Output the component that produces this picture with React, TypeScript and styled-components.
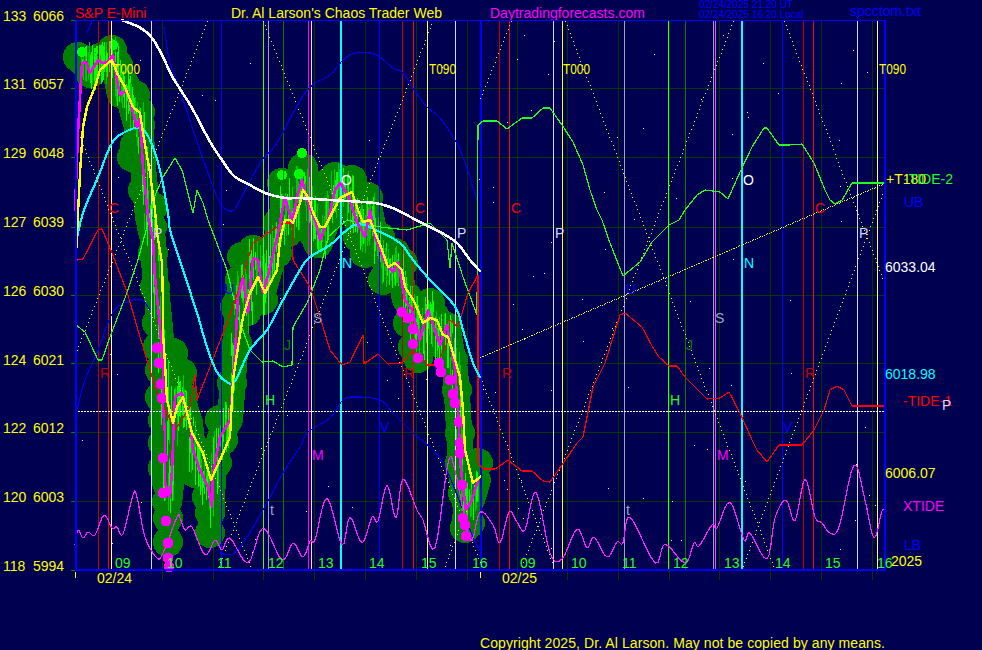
import React from "react";
import styled, { createGlobalStyle } from "styled-components";

const NAVY = "#000050";
const YELLOW = "#ffff00";
const LIME = "#20ff20";
const RED_DK = "#c00000";
const RED = "#ff0000";
const BLUE = "#0000ff";
const CYAN = "#00ffff";
const MAGENTA = "#ff00ff";
const LAV = "#d8d8ff";
const GRAY = "#a0a0c8";
const GRID = "#003800";
const GREEN_DK = "#008000";

const GlobalStyle = createGlobalStyle`
  html, body { margin: 0; padding: 0; background: ${NAVY}; overflow: hidden; }
`;

const Page = styled.div`
  width: 982px;
  height: 650px;
  display: flex;
  flex-direction: column;
  background: ${NAVY};
  font-family: "Liberation Sans", Arial, sans-serif;
  font-size: 14px;
`;

const TitleBar = styled.div`
  height: 20px;
  display: flex;
  align-items: flex-start;
  padding-left: 75px;
  line-height: 16px;
  padding-top: 5px;
  box-sizing: border-box;
`;

const Title = styled.span<{ $color: string; $gap: number; $width: number }>`
  color: ${(p) => p.$color};
  margin-left: ${(p) => p.$gap}px;
  width: ${(p) => p.$width}px;
  white-space: nowrap;
`;

const Stamp = styled.div`
  margin-left: 53px;
  width: 151px;
  margin-top: -5px;
  color: ${BLUE};
  font-size: 10px;
  line-height: 10px;
  white-space: nowrap;
`;

const FileName = styled.span`
  color: ${BLUE};
  margin-top: -2px;
  white-space: nowrap;
`;

const Chart = styled.svg`
  display: block;
  flex: none;
  overflow: visible;
  font-family: "Liberation Sans", Arial, sans-serif;
  font-size: 14px;
`;

const Copyright = styled.div`
  height: 20px;
  padding-left: 480px;
  color: ${YELLOW};
  line-height: 26px;
  letter-spacing: 0.08px;
  white-space: nowrap;
`;

const Label = styled.text<{ $color: string }>`
  fill: ${(p) => p.$color};
`;

const Rule = styled.line<{ $color: string; $w?: number; $dash?: string }>`
  stroke: ${(p) => p.$color};
  stroke-width: ${(p) => p.$w ?? 1};
  stroke-dasharray: ${(p) => p.$dash ?? "none"};
  shape-rendering: crispEdges;
`;

const Trace = styled.polyline<{ $color: string; $w?: number }>`
  fill: none;
  stroke: ${(p) => p.$color};
  stroke-width: ${(p) => p.$w ?? 1.2};
  stroke-linejoin: round;
  stroke-linecap: round;
  shape-rendering: crispEdges;
`;

const Blob = styled.circle<{ $color: string }>`
  fill: ${(p) => p.$color};
  shape-rendering: crispEdges;
`;

const Pixel = styled.rect<{ $color: string }>`
  fill: ${(p) => p.$color};
  shape-rendering: crispEdges;
`;

// ---- data ----
const gridY = [88, 157, 227, 295, 363, 432, 501];
const hourX = [162, 213, 263, 314, 365, 416, 467, 517, 567, 618, 669, 719, 770, 821, 872];

const verticals: [number, string, number][] = [
  [98, RED_DK, 1], [108, RED, 1], [111, "#ffffb0", 1], [151, LAV, 1], [221, BLUE, 1], [263, "#30ff30", 1],
  [268, GRAY, 1], [283, GREEN_DK, 1], [308, MAGENTA, 1], [311, "#ffd0e0", 1], [340, CYAN, 2], [379, BLUE, 1],
  [402, RED_DK, 1], [413, RED, 1], [427, "#ffff60", 1], [455, LAV, 1], [480, BLUE, 2], [499, RED_DK, 1],
  [509, RED, 1], [553, LAV, 1], [562, YELLOW, 1], [624, GRAY, 1], [668, "#30ff30", 1], [685, GREEN_DK, 1],
  [713, GRAY, 1], [715, "#ff40ff", 1], [741, CYAN, 2], [782, BLUE, 1], [803, RED_DK, 1], [813, RED, 1],
  [857, LAV, 1], [877, "#ffff60", 1],
];

const dotted: [number, number, number, number][] = [
  [75, 354, 207, 21], [75, 125, 252, 570], [263, 21, 483, 570], [433, 20, 217, 570], [443, 570, 480, 475],
  [480, 98, 511, 21], [480, 377, 555, 570], [733, 21, 520, 570], [565, 21, 775, 570], [784, 21, 884, 282],
  [741, 570, 884, 190],
];

const upperBand =
  "87,33 92,21 M164,27 170,63 180,90 193,130 207,170 220,203 232,211 240,200 260,163 277,143 293,113 310,87 330,75 343,60 355,53 370,53 380,57 393,68 402,72 413,88 427,107 440,118 453,137 463,157 477,200";
const lowerBand =
  "75,417 85,380 97,353 113,312 130,301 142,300 150,310 M220,553 233,554 247,537 267,503 283,473 300,447 308,432 330,418 343,400 357,397 380,400 393,413 413,433 443,463 473,537 480,550";

const cyanLine =
  "76,243 83,213 98,177 112,143 125,132 140,128 150,140 160,170 168,213 170,230 183,270 197,313 207,347 217,372 227,382 235,381 250,350 267,330 283,300 300,270 310,257 330,245 347,230 360,224 380,232 400,243 413,260 430,280 447,297 457,310 463,330 473,363 480,377";

const whiteLine =
  "122,20 132,24 142,29 152,38 162,55 172,76 182,92 192,108 202,127 212,145 222,160 232,174 240,180 250,185 265,193 285,198 300,198 330,200 363,202 380,204 397,210 418,221 440,232 457,243 470,260 480,271";

const greenTide =
  "76,325 85,332 98,360 102,360 110,337 125,298 137,263 147,227 153,200 163,177 175,158 182,170 193,213 197,190 203,203 208,220 227,270 238,317 250,350 262,362 273,361 283,367 292,365 293,327 307,303 320,270 328,237 347,220 380,227 407,230 430,223 447,240 450,268 452,243 463,277 477,315 478,125 483,121 497,121 507,129 522,118 532,118 543,108 550,108 562,125 573,142 583,165 590,190 597,210 602,220 610,243 623,276 640,262 652,242 669,225 679,220 685,210 697,195 705,190 720,192 728,199 740,172 752,147 764,128 767,128 779,145 789,145 802,144 814,163 825,190 830,200 835,204 842,200 852,183 884,183";

const redTide =
  "75,267 77,260 83,259 98,230 102,229 112,253 127,292 140,337 157,393 175,430 190,407 195,375 197,400 210,367 233,307 253,243 283,223 292,223 293,260 310,287 320,317 330,350 342,365 350,362 363,335 364,364 378,354 388,364 402,363 413,350 427,365 437,365 447,343 450,320 458,327 468,293 478,275 478,463 483,469 495,469 508,460 522,471 532,471 543,481 550,482 562,465 577,443 583,437 593,387 605,363 620,315 625,313 642,327 652,346 659,357 669,366 677,366 685,377 695,387 707,399 720,398 729,392 740,413 752,440 757,450 767,462 779,445 802,445 814,430 824,410 830,390 837,386 844,390 852,406 884,406";

const xtide =
  "75,545 78,530 83,538 88,532 95,535 104,515 112,528 117,527 123,534 133,495 137,497 145,537 157,558 163,553 177,517 180,518 185,530 192,527 205,555 215,540 222,550 230,538 248,563 263,528 282,560 293,543 303,557 310,541 315,540 327,498 342,545 350,517 362,543 372,517 378,521 387,485 396,518 403,479 417,510 423,520 435,548 448,463 455,470 470,540 480,512 493,525 500,543 509,512 517,522 525,530 536,492 550,553 562,559 577,529 587,548 594,537 607,557 617,542 623,543 630,517 655,563 665,544 685,563 694,543 699,546 712,525 717,528 730,502 744,540 750,533 767,559 775,518 786,500 795,521 805,479 815,517 822,523 830,533 839,527 854,465 865,500 874,538 882,511 885,512";

const yellowPrice =
  "76,255 80,173 83,127 87,107 95,87 100,70 108,63 112,60 117,73 125,87 133,107 140,113 143,133 150,173 155,210 157,233 162,263 163,303 163,333 165,363 167,400 173,423 177,407 183,397 188,417 192,433 203,453 211,480 220,460 230,437 233,380 238,347 243,317 250,293 258,277 265,293 277,270 280,240 285,220 290,220 293,223 300,203 303,190 308,197 313,212 320,227 325,227 332,213 340,198 352,192 358,210 363,222 370,220 377,237 382,250 388,267 395,263 402,270 405,287 415,303 423,323 430,318 437,320 443,335 448,337 453,353 460,377 463,410 465,450 473,483 480,477";

const magentaPrice =
  "75,210 78,133 82,63 86,62 90,73 98,60 103,63 108,62 113,55 117,80 120,95 127,90 133,113 137,127 140,117 143,167 148,217 153,240 155,277 160,327 163,367 163,407 165,433 165,450 165,483 170,497 172,470 175,397 182,393 185,407 190,423 193,450 200,470 208,487 212,507 213,473 220,437 230,420 235,353 238,297 243,278 248,313 253,258 258,260 263,293 270,268 278,233 285,197 292,223 297,197 302,180 308,203 315,220 320,240 328,220 335,190 340,183 348,195 357,222 365,237 370,210 375,237 385,263 393,272 398,262 405,300 412,310 420,340 428,310 435,330 440,345 447,325 455,370 458,410 461,470 466,510 472,500 478,480";

const blobCenters: [number, number][] = [
  [78, 57], [90, 73], [100, 58], [112, 50], [105, 65], [118, 65], [125, 85], [135, 95], [140, 112], [140, 125], [135, 145], [132, 157],
  [143, 190], [153, 207], [152, 227], [153, 253], [155, 287], [157, 323], [158, 347], [160, 370], [173, 353], [182, 373], [183, 397],
  [160, 397], [163, 420], [163, 443], [163, 468], [167, 502], [168, 518], [168, 542], [175, 430], [197, 450], [195, 473], [207, 497],
  [210, 513], [210, 533], [217, 463], [223, 440], [220, 420], [232, 383], [237, 343], [235, 307], [240, 280], [242, 257], [263, 300],
  [263, 270], [253, 250], [277, 253], [287, 233], [303, 168], [282, 183], [285, 200], [300, 183], [308, 200], [278, 223], [335, 177],
  [352, 180], [328, 183], [368, 197], [325, 197], [313, 233], [318, 243], [362, 230], [342, 193], [380, 237], [395, 253], [398, 260],
  [365, 253], [358, 237], [383, 280], [393, 253], [403, 263], [407, 297], [430, 303], [417, 337], [420, 350], [443, 330], [408, 323],
  [413, 347], [418, 358], [447, 327], [435, 317], [453, 360], [457, 390], [460, 433], [460, 463], [478, 463], [463, 473], [473, 487],
  [463, 493], [470, 493], [467, 517], [465, 528], [470, 523],
];

const brightCenters: [number, number][] = [[82, 52], [100, 50], [113, 45], [282, 175], [299, 174], [302, 153]];

const pinkDots: [number, number][] = [
  [157, 348], [159, 363], [161, 384], [162, 398], [163, 458], [163, 493], [166, 521], [168, 543], [168, 558], [169, 567], [402, 312],
  [408, 318], [413, 329], [413, 344], [418, 358], [439, 363], [441, 372], [450, 380], [453, 394], [455, 403], [459, 422], [460, 443],
  [460, 453], [462, 485], [463, 518], [465, 525], [466, 536],
];

const letters: [string, number, number, string][] = [
  ["T000", 113, 74, YELLOW], ["T090", 429, 74, YELLOW], ["T000", 563, 74, YELLOW], ["T090", 879, 74, YELLOW],
  ["C", 109, 213, RED], ["C", 415, 213, RED], ["C", 511, 213, RED], ["C", 815, 213, RED],
  ["P", 153, 238, LAV], ["P", 457, 238, LAV], ["P", 555, 238, LAV], ["P", 859, 238, LAV],
  ["R", 100, 378, RED_DK], ["R", 404, 378, RED_DK], ["R", 502, 378, RED_DK], ["R", 805, 378, RED_DK],
  ["O", 341, 185, "#ffffff"], ["O", 743, 185, "#ffffff"], ["N", 342, 268, CYAN], ["N", 744, 268, CYAN],
  ["S", 313, 323, GRAY], ["S", 715, 323, GRAY], ["J", 284, 350, GREEN_DK], ["J", 686, 350, GREEN_DK],
  ["H", 265, 405, LIME], ["H", 670, 405, LIME], ["M", 312, 460, MAGENTA], ["M", 717, 460, MAGENTA],
  ["V", 380, 432, BLUE], ["V", 783, 432, BLUE], ["U", 224, 294, BLUE], ["U", 626, 294, BLUE],
  ["t", 270, 515, GRAY], ["t", 626, 515, GRAY],
];

const scale: [string, string, number][] = [
  ["133", "6066", 21], ["131", "6057", 89], ["129", "6048", 158], ["127", "6039", 227], ["126", "6030", 296],
  ["124", "6021", 365], ["122", "6012", 433], ["120", "6003", 502], ["118", "5994", 571],
];

const hourLabels: [string, number][] = [
  ["09", 115], ["10", 167], ["11", 217], ["12", 268], ["13", 318], ["14", 369], ["15", 421], ["16", 472],
  ["09", 520], ["10", 571], ["11", 622], ["12", 673], ["13", 724], ["14", 775], ["15", 825], ["16", 877],
];

const rightLabels: [string, number, number, string][] = [
  ["+T180", 886, 184, YELLOW], ["-TIDE-2", 904, 184, LIME], ["UB", 904, 207, BLUE], ["6033.04", 885, 272, "#ffffff"],
  ["6018.98", 885, 379, CYAN], ["-TIDE-1", 903, 406, RED], ["P", 942, 410, LAV], ["6006.07", 885, 478, YELLOW],
  ["XTIDE", 903, 511, MAGENTA], ["LB", 904, 550, BLUE], ["2025", 891, 566, YELLOW],
];

// seeded so the picture stays the same between runs
function makeRandom(seed: number) {
  let s = seed;
  return () => {
    s = (s * 1664525 + 1013904223) % 4294967296;
    return s / 4294967296;
  };
}

const parsePts = (d: string) => d.trim().split(" ").map((p) => p.split(",").map(Number));

// catmull-rom through the read-off points, the source curves are smooth
function smooth(d: string) {
  const pts = parsePts(d);
  const out: string[] = [];
  for (let i = 0; i < pts.length - 1; i++) {
    const p0 = pts[Math.max(i - 1, 0)];
    const p1 = pts[i];
    const p2 = pts[i + 1];
    const p3 = pts[Math.min(i + 2, pts.length - 1)];
    for (let k = 0; k < 5; k++) {
      const t = k / 5;
      const f = (a: number, b: number, c: number, e: number) =>
        0.5 * (2 * b + (c - a) * t + (2 * a - 5 * b + 4 * c - e) * t * t + (3 * b - a - 3 * c + e) * t * t * t);
      out.push(`${f(p0[0], p1[0], p2[0], p3[0]).toFixed(1)},${f(p0[1], p1[1], p2[1], p3[1]).toFixed(1)}`);
    }
  }
  const last = pts[pts.length - 1];
  out.push(`${last[0]},${last[1]}`);
  return out.join(" ");
}

const rnd = makeRandom(77);
const stars = Array.from({ length: 130 }, () => [Math.floor(76 + rnd() * 808), Math.floor(22 + rnd() * 545)]);

const pricePts = parsePts(magentaPrice);
const blobPath = pricePts.slice(2).map((p) => p.join(",")).join(" ");

const spikes: { x: number; y1: number; y2: number; bright: boolean }[] = [];
for (let i = 2; i < pricePts.length - 1; i++) {
  const [x0, y0] = pricePts[i];
  const [x1, y1] = pricePts[i + 1];
  const n = Math.max(3, Math.round(Math.abs(x1 - x0) * 1.6));
  for (let k = 0; k < n; k++) {
    const t = k / n;
    const x = Math.round(x0 + (x1 - x0) * t + (rnd() - 0.5) * 10);
    const y = y0 + (y1 - y0) * t;
    spikes.push({ x: x + 0.5, y1: y - 3 - rnd() * 18, y2: y + 3 + rnd() * 20, bright: rnd() > 0.45 });
  }
}

function dotsOn(x1: number, y1: number, x2: number, y2: number, stepY: number) {
  const n = Math.round(Math.abs(y2 - y1) / stepY);
  return Array.from({ length: n + 1 }, (_, i) => [
    Math.round(x1 + ((x2 - x1) * i) / n),
    Math.round(y1 + ((y2 - y1) * i) / n),
  ]);
}

const triangleDots = dotted.flatMap(([a, b, c, d]) => dotsOn(a, b, c, d, 4));
const slopeDots = dotsOn(480, 357, 884, 183, 0.75);

function Band({ d, color }: { d: string; color: string }) {
  return (
    <>
      {d.split(" M").map((part) => (
        <Trace key={part} points={smooth(part)} $color={color} />
      ))}
    </>
  );
}

export default function App() {
  return (
    <Page>
      <GlobalStyle />
      <TitleBar>
        <Title $color={RED} $gap={0} $width={71}>S&amp;P E-Mini</Title>
        <Title $color={YELLOW} $gap={85} $width={213}>Dr. Al Larson's Chaos Trader Web</Title>
        <Title $color={MAGENTA} $gap={46} $width={156}>Daytradingforecasts.com</Title>
        <Stamp>
          02/24/2025 21:20 UT
          <br />
          02/24/2025 16:20 Local
        </Stamp>
        <FileName>spcctom.txt</FileName>
      </TitleBar>

      <Chart width={982} height={610} viewBox="0 20 982 610">
        {gridY.map((y) => (
          <Rule key={y} x1={75} x2={884} y1={y + 0.5} y2={y + 0.5} $color={GRID} />
        ))}
        {hourX.map((x) => (
          <Rule key={x} x1={x + 0.5} x2={x + 0.5} y1={21} y2={580} $color={GRID} />
        ))}
        {[20, 88, 157, 227, 295, 363, 432, 501, 570].map((y) => (
          <Rule key={y} x1={71} x2={75} y1={y + 0.5} y2={y + 0.5} $color={GREEN_DK} />
        ))}

        {stars.map(([x, y], i) => (
          <Pixel key={i} x={x} y={y} width={1} height={1} $color="#ffffff" />
        ))}

        <Trace points={blobPath} $color={GREEN_DK} $w={26} />
        {blobCenters.map(([x, y], i) => (
          <Blob key={i} cx={x} cy={y} r={15} $color={GREEN_DK} />
        ))}
        {spikes.map((s, i) => (
          <Rule key={i} x1={s.x} x2={s.x} y1={s.y1} y2={s.y2} $color={s.bright ? "#00ff00" : "#00c800"} />
        ))}
        {brightCenters.map(([x, y], i) => (
          <Blob key={i} cx={x} cy={y} r={5} $color="#00ff00" />
        ))}

        {verticals.map(([x, color, w]) => (
          <Rule key={x} x1={x + w / 2} x2={x + w / 2} y1={21} y2={570} $color={color} $w={w} />
        ))}

        {triangleDots.map(([x, y], i) => (
          <Pixel key={i} x={x} y={y} width={1} height={1} $color={YELLOW} />
        ))}
        <Rule x1={75} x2={884} y1={411.5} y2={411.5} $color="#ffffff" $dash="2 1" />

        <Band d={upperBand} color="#0000e8" />
        <Band d={lowerBand} color="#0000e8" />
        <Trace points={greenTide} $color={LIME} />
        <Trace points={redTide} $color={RED} />
        <Trace points={smooth(xtide)} $color="#ff20ff" />
        {slopeDots.map(([x, y], i) => (
          <Pixel key={i} x={x} y={y} width={1} height={1} $color={YELLOW} />
        ))}

        <Trace points={smooth(cyanLine)} $color={CYAN} $w={2.2} />
        <Trace points={magentaPrice} $color={MAGENTA} $w={2.6} />
        {pinkDots.map(([x, y], i) => (
          <Blob key={i} cx={x} cy={y} r={5.5} $color={MAGENTA} />
        ))}
        <Trace points={yellowPrice} $color={YELLOW} $w={2.4} />
        <Trace points={smooth(whiteLine)} $color="#ffffff" $w={2.6} />

        <Rule x1={75} x2={885} y1={20.5} y2={20.5} $color={BLUE} />
        <Rule x1={75} x2={886} y1={570} y2={570} $color={BLUE} $w={2} />
        <Rule x1={76} x2={76} y1={20} y2={570} $color={BLUE} $w={2} />
        <Rule x1={885} x2={885} y1={20} y2={571} $color={BLUE} $w={2.5} />
        <Rule x1={75.5} x2={75.5} y1={572} y2={578} $color={YELLOW} />
        <Rule x1={480.5} x2={480.5} y1={572} y2={578} $color={YELLOW} />

        {scale.map(([a, b, y]) => (
          <React.Fragment key={a}>
            <Label x={3} y={y} $color={YELLOW}>{a}</Label>
            <Label x={33} y={y} $color={YELLOW}>{b}</Label>
          </React.Fragment>
        ))}
        {letters.map(([t, x, y, c]) => (
          <Label key={`${t}${x}`} x={x} y={y} $color={c} textLength={t.length > 1 ? 27 : undefined} lengthAdjust="spacingAndGlyphs">
            {t}
          </Label>
        ))}
        {hourLabels.map(([t, x]) => (
          <Label key={x} x={x} y={568} $color={LIME}>{t}</Label>
        ))}
        <Label x={97} y={583} $color={YELLOW}>02/24</Label>
        <Label x={502} y={583} $color={YELLOW}>02/25</Label>
        {rightLabels.map(([t, x, y, c]) => (
          <Label key={t} x={x} y={y} $color={c}>{t}</Label>
        ))}
      </Chart>

      <Copyright>Copyright 2025, Dr. Al Larson. May not be copied by any means.</Copyright>
    </Page>
  );
}
